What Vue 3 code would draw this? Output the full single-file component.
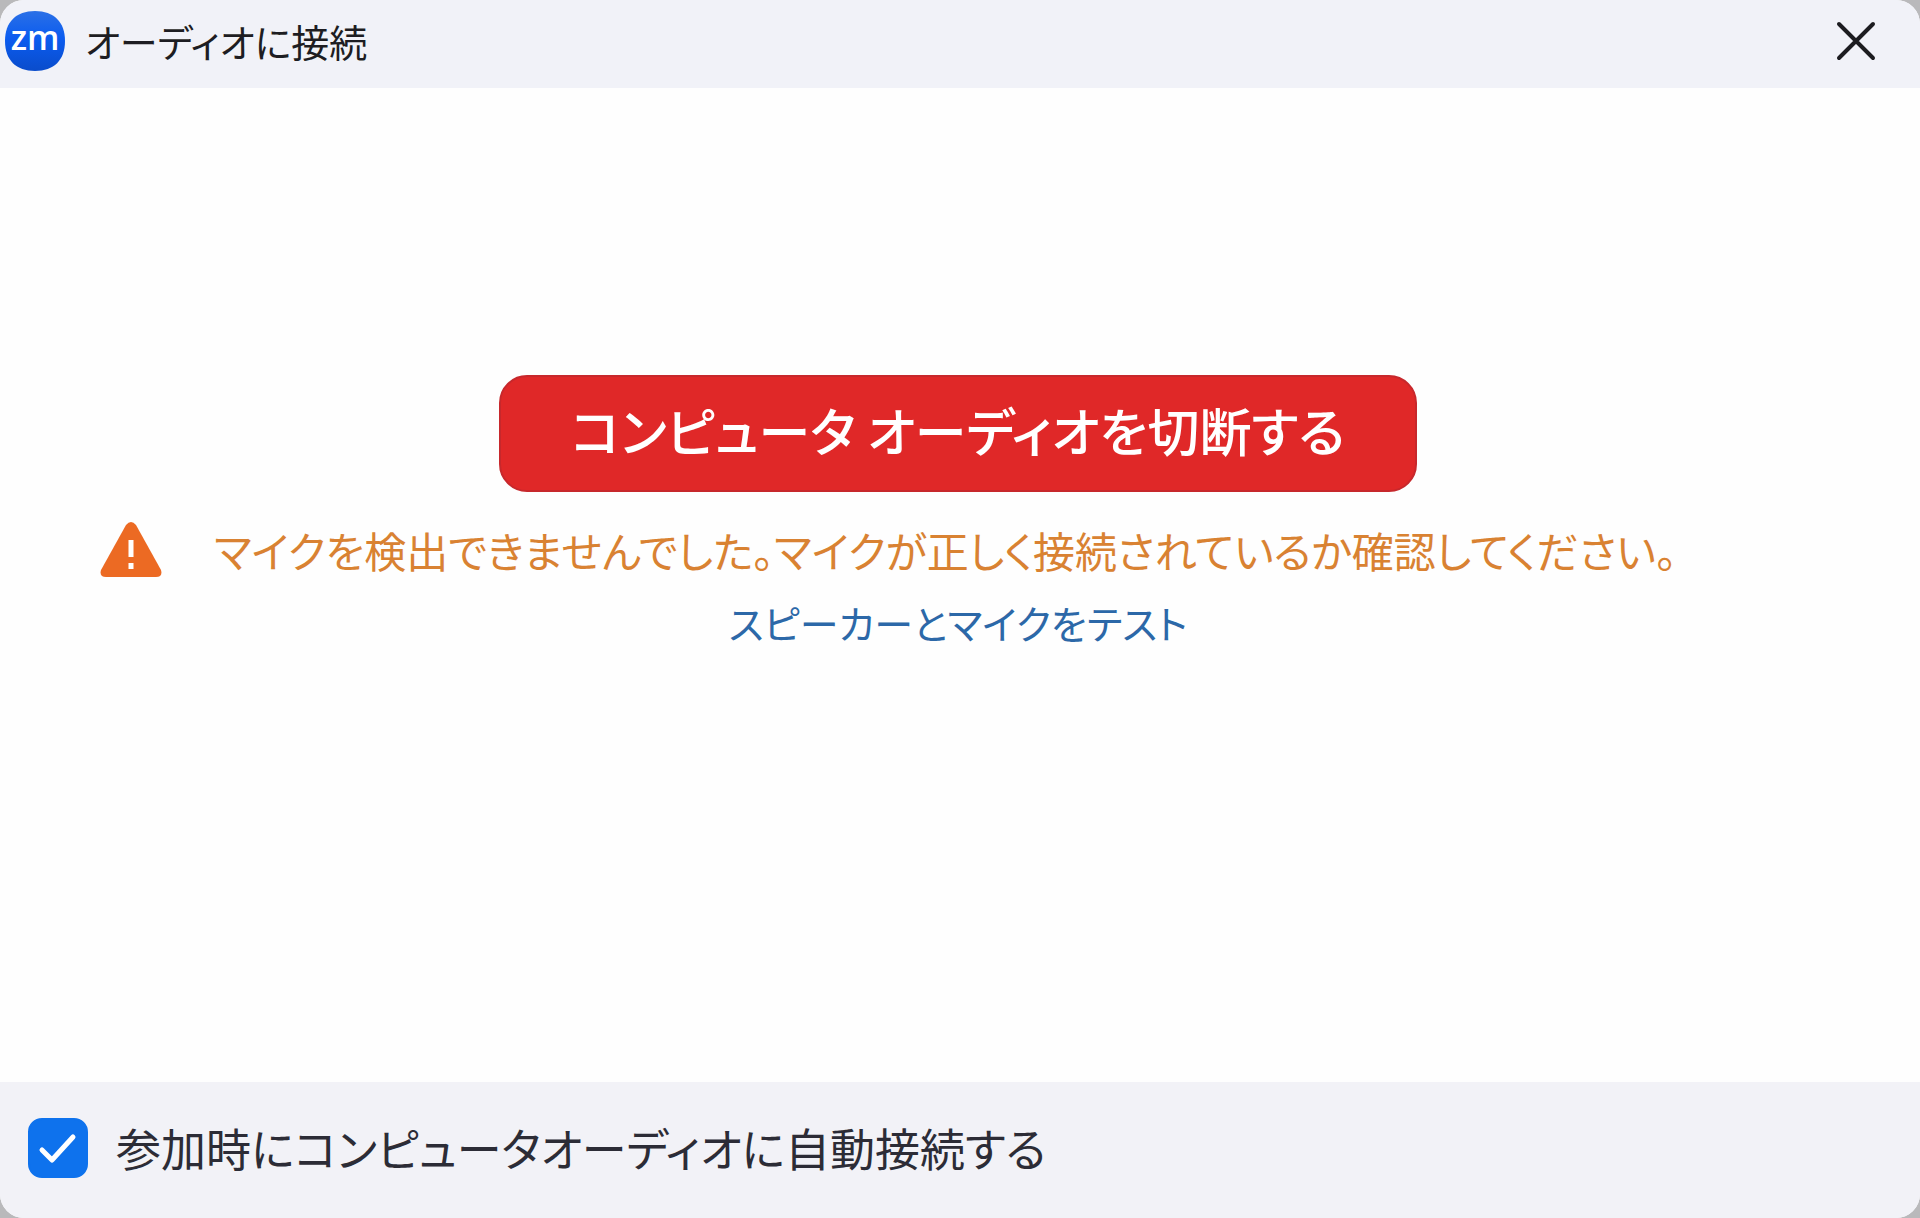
<template>
  <div class="dialog" role="dialog" aria-labelledby="dialog-title">
    <header class="title-bar">
      <svg class="app-logo" viewBox="0 0 60 60" role="img" aria-label="Zoom">
        <defs>
          <linearGradient id="logo-fill" x1="0" y1="0" x2="0" y2="1">
            <stop offset="0" stop-color="#2b70e6" />
            <stop offset="0.45" stop-color="#0b5cf0" />
            <stop offset="1" stop-color="#0a4ccb" />
          </linearGradient>
        </defs>
        <path
          d="M30 0C49 0 60 11 60 30S49 60 30 60 0 49 0 30 11 0 30 0Z"
          fill="url(#logo-fill)"
        />
        <text x="30" y="39" text-anchor="middle" class="logo-text">zm</text>
      </svg>
      <h1 id="dialog-title" class="title">オーディオに接続</h1>
      <button type="button" class="close-btn" aria-label="閉じる">
        <svg viewBox="0 0 40 40" aria-hidden="true">
          <path d="M3 3L37 37M37 3L3 37" />
        </svg>
      </button>
    </header>

    <main class="content">
      <button type="button" class="audio-btn" @click="toggleAudio">
        コンピュータ オーディオを切断する
      </button>
      <div class="warning" role="alert">
        <svg class="warning-icon" viewBox="0 0 62 56" aria-hidden="true">
          <path
            d="M26 3Q31 -3 36 3L61 48Q63 55 56 55H6Q-1 55 1 48Z"
            fill="#ec6a23"
          />
          <path d="M31 18V35M31 41V47" stroke="#fff" stroke-width="5" />
        </svg>
        <p class="warning-text">{{ warning }}</p>
      </div>
      <a href="#" class="test-link" @click.prevent>スピーカーとマイクをテスト</a>
    </main>

    <footer class="footer">
      <label class="auto-connect" for="auto-connect">
        <span class="check">
          <input id="auto-connect" v-model="autoConnect" type="checkbox" />
          <svg v-if="autoConnect" viewBox="0 0 60 60" aria-hidden="true">
            <path d="M14 32L24 42L45 19" />
          </svg>
        </span>
        <span>参加時にコンピュータオーディオに自動接続する</span>
      </label>
    </footer>
  </div>
</template>

<script setup>
import { ref } from 'vue';

const autoConnect = ref(true);
const audioConnected = ref(true);

const warning =
  'マイクを検出できませんでした。マイクが正しく接続されているか確認してください。';

function toggleAudio() {
  audioConnected.value = !audioConnected.value;
}
</script>

<style>
body {
  margin: 0;
  background: #b9b9bb;
}
</style>

<style scoped>
.dialog {
  display: flex;
  flex-direction: column;
  min-height: 100vh;
  border-radius: 24px;
  overflow: hidden;
  background: #fefefe;
  color: #1d1d22;
  font-family: 'Noto Sans CJK JP', sans-serif;
  font-feature-settings: 'palt';
}

.title-bar {
  display: flex;
  align-items: center;
  height: 88px;
  padding: 0 40px 6px 5px;
  box-sizing: border-box;
  background: #f1f2f8;
}

.app-logo {
  width: 60px;
  height: 60px;
}

.logo-text {
  fill: #fff;
  font-family: 'Open Sans', sans-serif;
  font-size: 34px;
  font-weight: 600;
}

.title {
  flex: 1;
  margin: 0 0 0 20px;
  font-size: 38px;
  font-weight: 400;
  line-height: 60px;
}

.close-btn {
  width: 48px;
  height: 48px;
  padding: 4px;
  border: 0;
  background: none;
  cursor: pointer;
}

.close-btn svg {
  display: block;
  width: 40px;
  height: 40px;
  fill: none;
  stroke: #1c1c20;
  stroke-width: 4;
  stroke-linecap: round;
}

.content {
  flex: 1;
  display: flex;
  flex-direction: column;
  align-items: center;
  padding: 287px 104px 48px 100px;
}

.audio-btn {
  height: 117px;
  padding: 0 70px 8px;
  border: 2px solid #c7282c;
  border-radius: 28px;
  background: #e02828;
  color: #fff;
  font: inherit;
  font-size: 52px;
  font-weight: 500;
  cursor: pointer;
}

.warning {
  display: flex;
  align-items: center;
  align-self: stretch;
  gap: 52px;
  margin-top: 22px;
}

.warning-icon {
  flex: none;
  width: 62px;
  height: 56px;
}

.warning-text {
  margin: 0;
  color: #d98232;
  font-size: 42px;
  line-height: 72px;
}

.test-link {
  color: #2c68a8;
  font-size: 39px;
  line-height: 72px;
  text-decoration: none;
}

.footer {
  display: flex;
  align-items: center;
  height: 136px;
  padding: 0 28px 4px;
  box-sizing: border-box;
  background: #f2f2f7;
}

.auto-connect {
  display: flex;
  align-items: center;
  gap: 28px;
  color: #2c2c36;
  font-size: 45px;
  line-height: 72px;
  cursor: pointer;
}

.check {
  display: grid;
  width: 60px;
  height: 60px;
}

.check input,
.check svg {
  grid-area: 1 / 1;
  width: 60px;
  height: 60px;
  margin: 0;
}

.check input {
  appearance: none;
  border: 2px solid #0e72ed;
  border-radius: 14px;
  background: #fff;
}

.check input:checked {
  background: #0e72ed;
}

.check svg {
  fill: none;
  stroke: #fff;
  stroke-width: 5;
  stroke-linecap: round;
  stroke-linejoin: round;
  pointer-events: none;
}
</style>
